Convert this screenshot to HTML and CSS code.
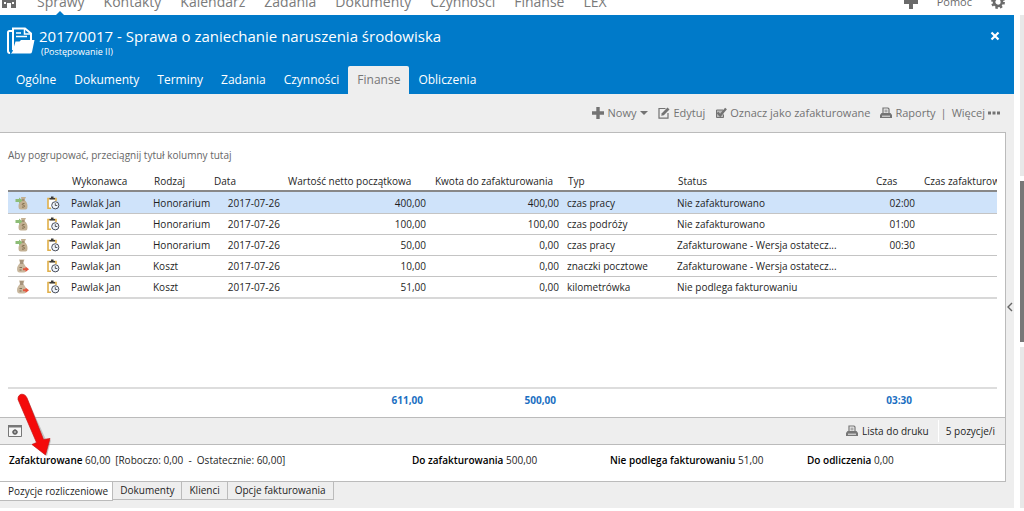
FILE: index.html
```html
<!DOCTYPE html>
<html lang="pl">
<head>
<meta charset="utf-8">
<title>2017/0017 - Finanse</title>
<link rel="stylesheet" href="styles.css">
</head>
<body>
<svg class="defs" aria-hidden="true">
  <symbol id="bag-in" viewBox="0 0 14 14">
    <path d="M6 1h5L9.500 4c2 1.500 3 3.500 3 6 0 2.500-.5 3.500-2 3.500H6C4 13.500 3.500 12.500 3.500 10c0-2.500 1.500-4.500 3-6z" fill="#c2b092"/>
    <path d="M6.500 4h3M9.500 7.500H8c-1 0-1 1.700 0 1.700h.6c1.200 0 1.200 1.900 0 1.900H7" stroke="#85704f" fill="none"/>
    <path d="M.5 3H4V1.500l3.500 3L4 7.500V6H.5z" fill="#8dbd76"/>
  </symbol>
  <symbol id="bag-out" viewBox="0 0 14 14">
    <path d="M4 .5h5.500L8 4c2 1.500 3 3.500 3 6 0 2.500-.5 3.500-2 3.500H4.500c-1.500 0-2.500-1-2.500-3.500S3.500 5.500 5 4z" fill="#c9b89e"/>
    <path d="M5 4h3.500M5 2h3.500M4.500 8.500h2.500M4.500 11h2" stroke="#857058" fill="none"/>
    <path d="M8 9.300h2.500V7.500L14 10.300 10.500 13v-1.700H8z" fill="#e3553c"/>
  </symbol>
  <symbol id="clip" viewBox="0 0 14 14">
    <path d="M2 3h8v9H2z" fill="#fff"/>
    <path d="M5 12.200H2V2.500h8V5" fill="none" stroke="#e0b04a" stroke-width="1.600"/>
    <path d="M3.500 3.500V2H5V.5h2.500V2H9v1.500z" fill="#3a3a3a"/>
    <circle cx="9.300" cy="9.300" r="3.600" fill="#eef3fa" stroke="#4a4f5c"/>
    <path d="M9.300 7.200v2.300h2" stroke="#333" stroke-width=".8" fill="none"/>
  </symbol>
  <symbol id="printer" viewBox="0 0 12 12">
    <path d="M3 6V1h5l1 1v4" fill="none" stroke="currentColor" stroke-width="1.200"/>
    <path d="M4.500 3.200h3M4.500 4.800h3" stroke="currentColor" stroke-width=".8"/>
    <path d="M1.500 6h9L12 8v3H0V8z" fill="currentColor"/>
    <path d="M2 9.200h8" stroke="#eee"/>
  </symbol>
  <symbol id="plus" viewBox="0 0 12 12"><path d="M4.300 0h3.400v4.300H12v3.400H7.700V12H4.300V7.700H0V4.300h4.300z" fill="currentColor"/></symbol>
</svg>

<div class="page">
  <div class="app">
    <nav class="topnav">
      <a href="#" class="home" aria-label="Start"><svg viewBox="0 0 18 16"><path d="M9 0 0 8h2v8h5v-5h4v5h5V8h2l-3-2.700V1h-2v2.500z" fill="#6a6a6a"/><path d="M4 10h2v2H4zM12 10h2v2h-2z" fill="#fff"/></svg></a>
      <a href="#" class="current">Sprawy</a>
      <a href="#">Kontakty</a>
      <a href="#">Kalendarz</a>
      <a href="#">Zadania</a>
      <a href="#">Dokumenty</a>
      <a href="#">Czynności</a>
      <a href="#">Finanse</a>
      <a href="#">LEX</a>
      <span class="navend">
        <button class="plain" aria-label="Dodaj"><svg class="i14"><use href="#plus"/></svg></button>
        <a href="#" class="help">Pomoc</a>
        <button class="plain" aria-label="Ustawienia"><svg class="i14" viewBox="0 0 16 16"><circle cx="8" cy="8" r="4.500" fill="none" stroke="#6a6a6a" stroke-width="3"/><circle cx="8" cy="8" r="6.700" fill="none" stroke="#6a6a6a" stroke-width="2.400" stroke-dasharray="2.800 2.460"/></svg></button>
      </span>
    </nav>

    <header class="case">
      <div class="casehead">
        <svg class="folder" viewBox="0 0 28 28"><path d="M5 4H2.500Q1 4 1 5.500V24q0 2 2 2" fill="none" stroke="#fff" stroke-width="2"/><path d="M6 23V1.500h12l6 5V13" fill="none" stroke="#fff" stroke-width="2"/><path d="M17.500 1.500V7H24M9 6h5M9 9.500h11" fill="none" stroke="#fff" stroke-width="1.500"/><path d="M8.500 14.500h4l1.500-1.500h13.500L25 25q-.4 1.500-2 1.500H3.500q1.500-.5 2-2z" fill="#fff"/></svg>
        <div class="names">
          <h1>2017/0017 - Sprawa o zaniechanie naruszenia środowiska</h1>
          <p>(Postępowanie II)</p>
        </div>
        <button class="plain close" aria-label="Zamknij"><svg viewBox="0 0 10 10"><path d="M1.500 1.500l7 7M8.500 1.500l-7 7" stroke="#fff" stroke-width="2.200"/></svg></button>
      </div>
      <nav class="tabs">
        <a href="#">Ogólne</a>
        <a href="#">Dokumenty</a>
        <a href="#">Terminy</a>
        <a href="#">Zadania</a>
        <a href="#">Czynności</a>
        <a href="#" class="on">Finanse</a>
        <a href="#">Obliczenia</a>
      </nav>
    </header>

    <div class="toolbar">
      <button class="plain"><svg class="i12"><use href="#plus"/></svg>Nowy<i class="caret"></i></button>
      <button class="plain"><svg class="i12" viewBox="0 0 12 12"><path d="M7.500 1.500H1v9.700h9V6" fill="none" stroke="currentColor" stroke-width="1.200"/><path d="M3.200 8.800l.6-2.600L9.500.5l2 2L5.800 8.200z" fill="currentColor"/></svg>Edytuj</button>
      <button class="plain"><svg class="i12" viewBox="0 0 12 12"><path d="M8 3H1.500v7.500h7V7.500" fill="#bbb" stroke="currentColor"/><path d="M2.500 5.500l2.700 3L11 1.500" fill="none" stroke="currentColor" stroke-width="2.400"/></svg>Oznacz jako zafakturowane</button>
      <span class="pair">
        <button class="plain"><svg class="i12"><use href="#printer"/></svg>Raporty</button>
        <span>|</span>
        <button class="plain">Więcej<svg class="i12" viewBox="0 0 12 12"><path d="M0 4.500h3v3H0zM4.500 4.500h3v3h-3zM9 4.500h3v3H9z" fill="currentColor"/></svg></button>
      </span>
    </div>

    <div class="work">
      <main class="panel">
        <section class="grid">
          <p class="hint">Aby pogrupować, przeciągnij tytuł kolumny tutaj</p>
          <div class="scroller">
            <table>
              <colgroup><col class="c-icon"><col class="c-icon2"><col class="c-who"><col class="c-kind"><col class="c-date"><col class="c-net"><col class="c-due"><col class="c-type"><col class="c-status"><col class="c-time"><col></colgroup>
              <thead>
                <tr><th></th><th></th><th>Wykonawca</th><th>Rodzaj</th><th>Data</th><th>Wartość netto początkowa</th><th>Kwota do zafakturowania</th><th>Typ</th><th>Status</th><th>Czas</th><th>Czas zafakturowany</th></tr>
              </thead>
              <tbody>
                <tr class="sel"><td><svg class="i14"><use href="#bag-in"/></svg></td><td><svg class="i14"><use href="#clip"/></svg></td><td>Pawlak Jan</td><td>Honorarium</td><td class="r">2017-07-26</td><td class="r">400,00</td><td class="r">400,00</td><td>czas pracy</td><td>Nie zafakturowano</td><td class="r">02:00</td><td></td></tr>
                <tr><td><svg class="i14"><use href="#bag-in"/></svg></td><td><svg class="i14"><use href="#clip"/></svg></td><td>Pawlak Jan</td><td>Honorarium</td><td class="r">2017-07-26</td><td class="r">100,00</td><td class="r">100,00</td><td>czas podróży</td><td>Nie zafakturowano</td><td class="r">01:00</td><td></td></tr>
                <tr><td><svg class="i14"><use href="#bag-in"/></svg></td><td><svg class="i14"><use href="#clip"/></svg></td><td>Pawlak Jan</td><td>Honorarium</td><td class="r">2017-07-26</td><td class="r">50,00</td><td class="r">0,00</td><td>czas pracy</td><td>Zafakturowane - Wersja ostatecz...</td><td class="r">00:30</td><td></td></tr>
                <tr><td><svg class="i14"><use href="#bag-out"/></svg></td><td><svg class="i14"><use href="#clip"/></svg></td><td>Pawlak Jan</td><td>Koszt</td><td class="r">2017-07-26</td><td class="r">10,00</td><td class="r">0,00</td><td>znaczki pocztowe</td><td>Zafakturowane - Wersja ostatecz...</td><td></td><td></td></tr>
                <tr class="last"><td><svg class="i14"><use href="#bag-out"/></svg></td><td><svg class="i14"><use href="#clip"/></svg></td><td>Pawlak Jan</td><td>Koszt</td><td class="r">2017-07-26</td><td class="r">51,00</td><td class="r">0,00</td><td>kilometrówka</td><td>Nie podlega fakturowaniu</td><td></td><td></td></tr>
              </tbody>
              <tfoot>
                <tr class="space"><td colspan="11"></td></tr>
                <tr class="sum"><td colspan="5"></td><td class="r">611,00</td><td class="r">500,00</td><td></td><td></td><td class="r">03:30</td><td></td></tr>
              </tfoot>
            </table>
          </div>
        </section>

        <div class="status">
          <button class="plain" aria-label="Ustawienia widoku"><svg class="view" viewBox="0 0 14 12"><path d="M.5.5h13v11H.5z" fill="#f6f6f6" stroke="#777"/><path d="M0 0h14v2.500H0z" fill="#777"/><circle cx="7" cy="7" r="1.800" fill="none" stroke="#666" stroke-width="1.600"/><path d="M7 4v6M4 7h1.500M8.500 7H10" stroke="#666" stroke-width=".8"/></svg></button>
          <button class="plain print"><svg class="i12"><use href="#printer"/></svg>Lista do druku</button>
          <span class="count">5 pozycje/i</span>
        </div>

        <div class="summary">
          <span class="billed"><b>Zafakturowane</b> 60,00 <span class="detail">[Roboczo: 0,00 &nbsp;- &nbsp;Ostatecznie: 60,00]</span></span>
          <span><b>Do zafakturowania</b> 500,00</span>
          <span><b>Nie podlega fakturowaniu</b> 51,00</span>
          <span><b>Do odliczenia</b> 0,00</span>
        </div>
      </main>
      <button class="plain expand" aria-label="Rozwiń panel"><svg viewBox="0 0 6 10"><path d="M5 1L1 5l4 4" fill="none" stroke="#666" stroke-width="1.400"/></svg></button>
    </div>

    <nav class="subtabs">
      <a href="#" class="on">Pozycje rozliczeniowe</a>
      <a href="#">Dokumenty</a>
      <a href="#">Klienci</a>
      <a href="#">Opcje fakturowania</a>
    </nav>
  </div>

  <div class="scrollbar"><span class="track top"></span><span class="thumb"></span><span class="track"></span></div>

  <svg class="arrow" viewBox="0 0 44 66" aria-hidden="true">
    <path d="M10 10L29 52" stroke="#999" stroke-opacity=".5" stroke-width="8" stroke-linecap="round"/>
    <path d="M20 55l17-6-4 16z" fill="#999" fill-opacity=".5"/>
    <path d="M4 8.500C3.500 2 11 1.500 13 7l16.500 41.500 6.500-1L31.500 64 18 53.500l4.500-2z" fill="#f40b0b" stroke="#c51414" stroke-width=".7"/>
  </svg>
</div>
</body>
</html>
```

FILE: styles.css
```css
* { box-sizing: border-box; }
body { margin: 0; background: #fff; color: #1e1e1e; font: 10px/14px "Open Sans", "Noto Sans", sans-serif; }
h1, p { margin: 0; font-weight: 400; }
a { color: inherit; text-decoration: none; }
svg { display: block; flex: none; }
.defs { display: none; }
.plain { display: flex; align-items: center; gap: 4px; margin: 0; padding: 0; border: 0; background: none; color: inherit; font: inherit; cursor: pointer; }
.i12 { width: 12px; height: 12px; }
.i14 { width: 14px; height: 14px; }

.page { position: relative; display: flex; gap: 6px; min-height: 100vh; }
.app { flex: 1; min-width: 0; }

.topnav { display: flex; align-items: flex-end; gap: 19px; height: 15px; padding-bottom: 3px; overflow: hidden; color: #7a7a7a; font-size: 14px; line-height: 20px; }
.topnav a { flex: none; }
.topnav .home { margin-bottom: 4px; }
.home svg { width: 18px; height: 16px; }
.navend { display: flex; align-items: center; gap: 19px; margin-left: auto; padding-right: 9px; color: #6a6a6a; font-size: 11px; }
.current::after { content: ""; position: absolute; top: 11px; left: 56px; border: 4px solid transparent; border-top: 0; border-bottom-color: #007ac9; }

.case { background: #007ac9; color: #fff; }
.casehead { display: flex; padding: 11px 14px 8px 7px; }
.folder { width: 28px; height: 28px; margin-top: 1px; }
.names { flex: 1; padding-left: 4px; }
.names h1 { font-size: 15px; line-height: 20px; }
.names p { padding-left: 2px; font-size: 9px; line-height: 12px; }
.close { align-self: flex-start; padding-top: 5px; }
.close svg { width: 10px; height: 10px; }
.tabs { display: flex; padding-left: 7px; font-size: 12px; line-height: 28px; }
.tabs a { padding: 0 9px; }
.tabs .on { border-radius: 2px 2px 0 0; background: #eee; color: #777; }

.toolbar { display: flex; justify-content: flex-end; gap: 10px; height: 38px; padding-right: 14px; background: #eee; color: #737373; font-size: 11px; }
.toolbar .plain { gap: 3px; }
.pair { display: flex; align-items: center; gap: 5px; }
.caret { margin-left: 1px; border: 4px solid transparent; border-top-color: currentColor; border-bottom: 0; }

.work { display: flex; background: #eee; }
.panel { flex: 1; min-width: 0; border: 1px solid #bbb; border-left: 0; background: #fff; }
.expand { width: 8px; padding-left: 1px; }
.expand svg { width: 6px; height: 10px; }

.grid { padding: 15px 8px 7px; }
.hint { color: #666; }
.scroller { margin-top: 10px; overflow: hidden; }
table { width: 100%; border-collapse: separate; border-spacing: 0; table-layout: fixed; }
th, td { padding: 0 3px 0 5px; text-align: left; font-weight: 400; white-space: nowrap; }
th { height: 20px; border-bottom: 2px solid #888; }
thead th { padding-left: 6px; }
td { height: 21px; border-bottom: 1px solid #c4c4c4; }
td:first-child { padding-left: 7px; }
.r { text-align: right; }
td.r:nth-child(5) { padding-right: 2px; }
.sel td { height: 22px; background: #cfe3fa; }
.last td { height: 22px; border-bottom: 2px solid #d8d8d8; }
.space td { height: 90px; border-bottom: 2px solid #ddd; }
.sum td { padding-right: 6px; border: 0; color: #1b6fc2; font-weight: 700; }
.c-icon { width: 33px; }
.c-icon2 { width: 25px; }
.c-who { width: 82px; }
.c-kind { width: 60px; }
.c-date { width: 74px; }
.c-net { width: 147px; }
.c-due { width: 133px; }
.c-type { width: 110px; }
.c-status { width: 198px; }
.c-time { width: 48px; }

.status { display: flex; align-items: center; height: 28px; padding-left: 8px; border: 1px solid #bbb; border-width: 1px 0; background: #eee; }
.view { width: 14px; height: 12px; }
.print { margin-left: auto; padding-right: 9px; }
.print svg { color: #777; }
.count { padding: 4px 10px 4px 7px; border-left: 1px solid #fff; }
.summary { display: grid; grid-template-columns: 403fr 198fr 197fr 198fr; padding: 8px 0 14px 9px; }
.summary b { color: #000; font-weight: 600; }
.detail { margin-left: 2px; }

.subtabs { display: flex; align-items: flex-start; height: 26px; background: #eee; line-height: 17px; }
.subtabs a { padding: 0 7px; border: 1px solid #bbb; border-width: 0 1px 1px 0; }
.subtabs .on { padding: 1px 4px 0 8px; background: #fff; }

.scrollbar { display: flex; flex-direction: column; gap: 5px; width: 4px; height: 508px; padding-top: 15px; }
.track { flex: 1; background: #e8e8e8; }
.track.top { flex: none; height: 161px; }
.thumb { height: 161px; background: #777; }
.arrow { position: absolute; top: 391px; left: 14px; width: 44px; height: 66px; }
```
